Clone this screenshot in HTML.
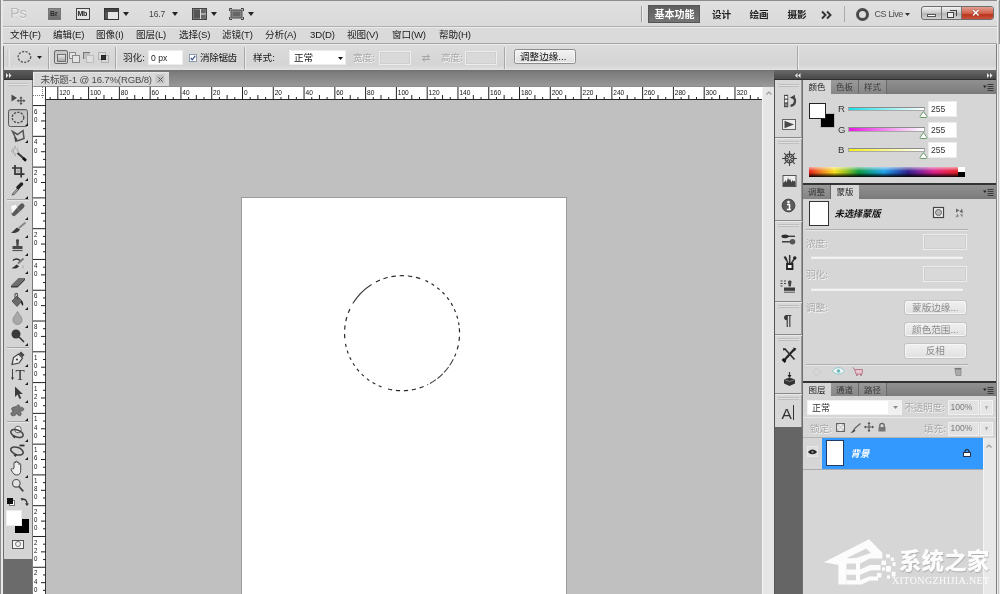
<!DOCTYPE html>
<html lang="zh-CN">
<head>
<meta charset="utf-8">
<title>Photoshop</title>
<style>
*{box-sizing:border-box;margin:0;padding:0}
html,body{width:1000px;height:594px;overflow:hidden;background:#d6d6d6}
body{position:relative;will-change:transform;font-family:"Liberation Sans","Noto Sans CJK SC",sans-serif;font-size:9.6px;color:#1a1a1a;line-height:1}
.a{position:absolute}
.t{position:absolute;white-space:nowrap;line-height:12px;height:12px}
.b{font-weight:bold}
.dis{color:#a9a9a9;text-shadow:0.7px 0.7px 0 #f8f8f8}
svg{position:absolute;overflow:visible}
#appbar{left:0;top:0;width:1000px;height:27px;background:linear-gradient(#e0e0e0,#dadada);border-top:1px solid #8d8d8d;border-bottom:1px solid #b0b0b0}
#menubar{left:0;top:27px;width:1000px;height:17px;background:#dadada;border-top:1px solid #ececec;border-bottom:1px solid #a4a4a4}
#optbar{left:0;top:44px;width:1000px;height:26px;background:linear-gradient(#dcdcdc,#d4d4d4 80%,#e2e2e2);border-top:1px solid #ececec}
#tabbar{left:3px;top:70px;width:771px;height:17px;background:linear-gradient(#707070 0,#7c7c7c 15%,#9a9a9a 100%)}
#doctab{left:33px;top:72px;width:136px;height:15px;background:#d8d8d8;border-left:1px solid #eee;border-top:1px solid #e6e6e6}
#hruler{left:33px;top:86px;width:729px;height:14px;background:#fff;border-top:1px solid #8c8c8c;border-bottom:1px solid #222}
#vruler{left:33px;top:99px;width:13px;height:495px;background:#fff;border-right:1px solid #3a3a3a}
#stage{left:46px;top:100px;width:716px;height:494px;background:#c0c0c0}
#canvas{left:241px;top:197px;width:326px;height:398px;background:#fff;border:1px solid #9c9c9c}
#vscroll{left:762px;top:87px;width:12px;height:507px;background:#e6e6e6;border-left:1px solid #f4f4f4}
#toolbar{left:3px;top:71px;width:30px;height:523px;background:#d4d4d4}
#dock{left:774px;top:71px;width:222px;height:523px;background:#656565}
.wl{left:0;top:0;width:3px;height:594px;background:#e8e8e8;border-left:1px solid #8e8e8e}
.wl2{left:3px;top:46px;width:1px;height:548px;background:#6e6e6e}
.wr{left:997px;top:0;width:3px;height:594px;background:#ebebeb}
.wr2{left:996px;top:44px;width:1px;height:550px;background:#808080}
.wr3{left:998px;top:1px;width:1px;height:593px;background:#c0c5ca}
.wr4{left:999px;top:0;width:1px;height:44px;background:#909090}
.ptabs{left:803px;width:193px;height:14px;background:linear-gradient(#919191,#7a7a7a)}
.ptab{position:absolute;top:0;height:14px;width:28px;text-align:center;line-height:15px;font-size:8.500px;color:#3a3a3a;border-right:1px solid #6a6a6a;background:linear-gradient(#9a9a9a,#858585)}
.ptab.on{background:#d6d6d6;color:#222;border-right:none;border-left:none}
.panel{left:803px;width:193px;background:#d6d6d6}
.inp{position:absolute;background:#fff;border:1px solid #ececec}
.dinp{position:absolute;background:#d9d9d9;border:1px solid #ededed;box-shadow:inset 0 0 0 1px #cfcfcf}
.btn{position:absolute;background:linear-gradient(#efefef,#e2e2e2);border:1px solid #f6f6f6;border-radius:2px;box-shadow:0 0 0 1px #c4c4c4;text-align:center;color:#8c8c8c}
.grip{position:absolute;left:3px;width:21px;height:3px;border-top:1px solid #bdbdbd;border-bottom:1px solid #bdbdbd;background:#e2e2e2}
.sep{position:absolute;left:0;width:27px;height:2px;border-top:1px solid #8a8a8a;background:#e8e8e8}
</style>
</head>
<body>
<div class="a" id="appbar"></div>
<div class="t" style="left:10px;top:5px;font-size:14.500px;line-height:16px;height:16px;color:#b8b8b8;letter-spacing:-0.2px;text-shadow:0 1px 0 #f4f4f4">Ps</div>
<div class="a" style="left:48px;top:8px;width:13px;height:12px;background:linear-gradient(#8a8a8a,#6d6d6d);border:1px solid #777"></div><div class="t b" style="left:50px;top:9px;font-size:7px;line-height:10px;height:10px;color:#2c2c2c">Br</div>
<div class="a" style="left:76px;top:8px;width:14px;height:12px;background:#e4e4e4;border:1px solid #444"></div><div class="t b" style="left:77.5px;top:9px;font-size:7px;line-height:10px;height:10px;color:#222;letter-spacing:-0.3px">Mb</div>
<svg style="left:104px;top:8px" width="15" height="12" viewBox="0 0 15 12"><rect x="0.5" y="0.5" width="14" height="11" fill="#e6e6e6" stroke="#333"/><rect x="1" y="1" width="13" height="3" fill="#444"/><rect x="1" y="4" width="3" height="7" fill="#555"/></svg>
<svg style="left:122.5px;top:12.0px" width="6" height="4" viewBox="0 0 6 4"><polygon points="0,0 6,0 3.0,4" fill="#222"/></svg>
<div class="t" style="left:149px;top:8px;font-size:8.600px;letter-spacing:-0.150px;color:#444">16.7</div>
<svg style="left:172.0px;top:12.0px" width="6" height="4" viewBox="0 0 6 4"><polygon points="0,0 6,0 3.0,4" fill="#222"/></svg>
<svg style="left:192px;top:8px" width="15" height="12" viewBox="0 0 15 12"><rect x="0.5" y="0.5" width="14" height="11" fill="#777" stroke="#444"/><rect x="2" y="2" width="6" height="8" fill="#555"/><rect x="9" y="2" width="4" height="3.5" fill="#666"/><rect x="9" y="6.5" width="4" height="3.5" fill="#666"/><path d="M8.5 1v10M9 6h5" stroke="#ddd" stroke-width="1"/></svg>
<svg style="left:210.5px;top:12.0px" width="6" height="4" viewBox="0 0 6 4"><polygon points="0,0 6,0 3.0,4" fill="#222"/></svg>
<svg style="left:229px;top:8px" width="15" height="12" viewBox="0 0 15 12"><rect x="2" y="2" width="11" height="8" fill="#999" stroke="#444"/><rect x="3.5" y="3.5" width="8" height="5" fill="#666"/><path d="M0.5 3V0.5H3M12 0.5h2.5V3M0.5 9v2.5H3M12 11.500h2.5V9" stroke="#444" fill="none"/></svg>
<svg style="left:248.0px;top:12.0px" width="6" height="4" viewBox="0 0 6 4"><polygon points="0,0 6,0 3.0,4" fill="#222"/></svg>
<div class="a" style="left:641px;top:6px;width:2px;height:16px;background:#9a9a9a;border-right:1px solid #eee"></div>
<div class="a" style="left:648px;top:5px;width:52px;height:18px;background:linear-gradient(#5e5e5e,#747474);border:1px solid #555"></div>
<div class="t b" style="left:654.5px;top:8.800px;font-size:10px;color:#fff">基本功能</div>
<div class="t b" style="left:712px;top:8.800px;font-size:9.6px;color:#222">设计</div>
<div class="t b" style="left:749.5px;top:8.800px;font-size:9.6px;color:#222">绘画</div>
<div class="t b" style="left:787.5px;top:8.800px;font-size:9.6px;color:#222">摄影</div>
<svg style="left:821px;top:10.500px" width="11" height="8" viewBox="0 0 11 8"><path d="M1 0.500l3.500 3.500-3.500 3.500M6 0.500l3.500 3.500-3.500 3.500" stroke="#333" stroke-width="1.900" fill="none"/></svg>
<div class="a" style="left:844px;top:6px;width:1px;height:16px;background:#aaa"></div>
<div class="a" style="left:855.5px;top:8px;width:13px;height:13px;border:3px solid #4a4a4a;border-radius:50%"></div>
<div class="t" style="left:874.5px;top:8px;font-size:9px;letter-spacing:-0.450px;color:#4c4c4c">CS Live</div>
<svg style="left:905.0px;top:13.0px" width="5" height="3" viewBox="0 0 5 3"><polygon points="0,0 5,0 2.5,3" fill="#333"/></svg>
<div class="a" style="left:921px;top:6px;width:73px;height:14px;border:1px solid #6e6e6e;border-radius:3px;background:linear-gradient(#f2f2f2,#c9c9c9 50%,#b4b4b4 51%,#d0d0d0);overflow:hidden"><div class="a" style="left:19px;top:0;width:1px;height:14px;background:#777"></div><div class="a" style="left:39px;top:0;width:33px;height:14px;background:linear-gradient(#e2a090,#cf5a44 50%,#b9341c 51%,#cf5f48);border-left:1px solid #777"></div><div class="a" style="left:5px;top:7px;width:9px;height:3px;background:#fff;border:1px solid #555"></div><div class="a" style="left:25px;top:5px;width:7px;height:6px;background:#eee;border:1px solid #444"></div><div class="a" style="left:28px;top:3px;width:7px;height:6px;border:1px solid #444;border-bottom:none;border-left:none"></div><div class="t b" style="left:50px;top:-0.500px;font-size:13px;color:#fff;text-shadow:0 0 1px #500">×</div></div>
<div class="a" id="menubar"></div>
<div class="t" style="left:10px;top:28.500px;letter-spacing:-0.150px">文件(F)</div>
<div class="t" style="left:53px;top:28.500px;letter-spacing:-0.150px">编辑(E)</div>
<div class="t" style="left:96px;top:28.500px;letter-spacing:-0.150px">图像(I)</div>
<div class="t" style="left:136px;top:28.500px;letter-spacing:-0.150px">图层(L)</div>
<div class="t" style="left:179px;top:28.500px;letter-spacing:-0.150px">选择(S)</div>
<div class="t" style="left:222px;top:28.500px;letter-spacing:-0.150px">滤镜(T)</div>
<div class="t" style="left:265px;top:28.500px;letter-spacing:-0.150px">分析(A)</div>
<div class="t" style="left:310px;top:28.500px;letter-spacing:-0.150px">3D(D)</div>
<div class="t" style="left:347px;top:28.500px;letter-spacing:-0.150px">视图(V)</div>
<div class="t" style="left:392px;top:28.500px;letter-spacing:-0.150px">窗口(W)</div>
<div class="t" style="left:439px;top:28.500px;letter-spacing:-0.150px">帮助(H)</div>
<div class="a" id="optbar"></div>
<div class="a" style="left:7px;top:49px;width:3px;height:18px;border-left:1px solid #cdcdcd;border-right:1px solid #e6e6e6"></div>
<svg style="left:17px;top:50px" width="15" height="15" viewBox="0 0 15 15"><ellipse cx="7.400" cy="6.900" rx="6.300" ry="5.400" fill="none" stroke="#555" stroke-width="1.300" stroke-dasharray="2.200 1.300"/></svg>
<svg style="left:36.5px;top:56.0px" width="5" height="3" viewBox="0 0 5 3"><polygon points="0,0 5,0 2.5,3" fill="#222"/></svg>
<div class="a" style="left:48px;top:47px;width:2px;height:22px;border-left:1px solid #a8a8a8;border-right:1px solid #ececec"></div>
<div class="a" style="left:54px;top:50px;width:14px;height:14px;border:1px solid #6a6a6a;border-radius:2px;background:linear-gradient(#c2c2c2,#d8d8d8)"></div>
<div class="a" style="left:57px;top:54px;width:9px;height:8px;border:1px solid #6e6e6e;background:linear-gradient(#e6e6e6,#a8a8a8)"></div>
<div class="a" style="left:69px;top:52px;width:7px;height:7px;border:1px solid #888;background:#e4e4e4"></div><div class="a" style="left:72px;top:55px;width:8px;height:8px;border:1px solid #888;background:#e4e4e4"></div>
<div class="a" style="left:86px;top:55px;width:8px;height:8px;border:1px solid #bbb;background:#dedede"></div><div class="a" style="left:83px;top:52px;width:7px;height:7px;border-left:1px solid #777;border-top:1px solid #777;background:#bdbdbd"></div><div class="a" style="left:86px;top:55px;width:4px;height:4px;background:#e0e0e0;border-left:1px solid #bbb;border-top:1px solid #bbb"></div>
<div class="a" style="left:98px;top:52px;width:8px;height:8px;border:1px solid #b0b0b0;background:#dcdcdc"></div><div class="a" style="left:101px;top:55px;width:8px;height:8px;border:1px solid #b0b0b0"></div><div class="a" style="left:101px;top:55px;width:5px;height:5px;background:#333;border:1px solid #222"></div>
<div class="a" style="left:115px;top:47px;width:2px;height:22px;border-left:1px solid #a8a8a8;border-right:1px solid #ececec"></div>
<div class="t" style="left:123px;top:51.500px">羽化:</div>
<div class="inp" style="left:147.5px;top:50px;width:35.500px;height:14.500px"></div><div class="t" style="left:151px;top:51.500px;color:#222;font-size:8.600px">0 px</div>
<div class="a" style="left:189px;top:53.500px;width:8px;height:8px;background:#fff;border:1px solid #8a9aa8"></div><svg style="left:190px;top:54.500px" width="6" height="6" viewBox="0 0 6 6"><path d="M0.800 3l1.500 1.800L5.200 0.800" stroke="#3a4f8c" stroke-width="1.200" fill="none"/></svg>
<div class="t" style="left:200px;top:51.500px;letter-spacing:-0.4px">消除锯齿</div>
<div class="a" style="left:244px;top:47px;width:2px;height:22px;border-left:1px solid #a8a8a8;border-right:1px solid #ececec"></div>
<div class="t" style="left:253px;top:51.500px">样式:</div>
<div class="inp" style="left:289px;top:50px;width:57px;height:15px"></div><div class="t" style="left:294px;top:51.500px">正常</div>
<svg style="left:337.5px;top:56.5px" width="5" height="3" viewBox="0 0 5 3"><polygon points="0,0 5,0 2.5,3" fill="#111"/></svg>
<div class="t dis" style="left:353px;top:51.500px">宽度:</div>
<div class="dinp" style="left:379px;top:50.500px;width:31.500px;height:14px"></div>
<svg style="left:421px;top:54px" width="10" height="8" viewBox="0 0 10 8"><path d="M1 2.500h7M6 0.500l2.500 2-2.500 2M9 5.500H2M4 3.500L1.500 5.500 4 7.500" stroke="#a4a4a4" stroke-width="1" fill="none"/></svg>
<div class="t dis" style="left:441px;top:51.500px">高度:</div>
<div class="dinp" style="left:465px;top:50.500px;width:32px;height:14px"></div>
<div class="a" style="left:504px;top:47px;width:2px;height:22px;border-left:1px solid #a8a8a8;border-right:1px solid #ececec"></div>
<div class="a" style="left:513.5px;top:49px;width:62.500px;height:14.500px;border:1px solid #8c8c8c;border-radius:2.500px;background:linear-gradient(#f4f4f4,#dedede);box-shadow:inset 0 0 0 1px #f6f6f6"></div><div class="t" style="left:520px;top:51px;color:#111">调整边缘...</div>
<div class="a" style="left:797px;top:46px;width:2px;height:24px;border-left:1px solid #a8a8a8;border-right:1px solid #ececec"></div>
<div class="a" id="tabbar"></div>
<div class="a" id="doctab"></div>
<div class="t" style="left:40.500px;top:73.500px;color:#4a4a4a;font-size:9.6px;letter-spacing:-0.170px">未标题-1 @ 16.7%(RGB/8)</div>
<div class="a" style="left:155px;top:74px;width:10px;height:10px;background:#c2c2c2;border:1px solid #cfcfcf"></div><svg style="left:157.500px;top:76.500px" width="5" height="5" viewBox="0 0 5 5"><path d="M0.300 0.300l4.400 4.400M4.700 0.300L0.300 4.700" stroke="#555" stroke-width="1"/></svg>
<div class="a" id="stage"></div>
<div class="a" id="canvas"></div>
<svg style="left:0;top:0" width="1000" height="594" viewBox="0 0 1000 594"><path d="M352.76 303.59A57.5 57.5 0 0 1 371.58 284.44" fill="none" stroke="#3a3a3a" stroke-width="1.05"/><path d="M375.95 281.97A57.5 57.5 0 0 1 423.59 279.89" fill="none" stroke="#2a2a2a" stroke-width="1.2" stroke-dasharray="4.400 3.800"/><path d="M425.44 280.67A57.5 57.5 0 0 1 458.99 325.20" fill="none" stroke="#2a2a2a" stroke-width="1.2" stroke-dasharray="3 3.900"/><path d="M459.33 328.19A57.5 57.5 0 0 1 454.58 356.59" fill="none" stroke="#2a2a2a" stroke-width="1.2" stroke-dasharray="4.200 4.400"/><path d="M453.28 359.30A57.5 57.5 0 0 1 427.26 384.88" fill="none" stroke="#3a3a3a" stroke-width="1.05" stroke-dasharray="7 2"/><path d="M423.59 386.51A57.5 57.5 0 0 1 384.28 387.89" fill="none" stroke="#2a2a2a" stroke-width="1.2" stroke-dasharray="4.200 3.800"/><path d="M381.44 386.88A57.5 57.5 0 0 1 345.11 341.20" fill="none" stroke="#2a2a2a" stroke-width="1.2" stroke-dasharray="3 3.900"/><path d="M344.77 338.21A57.5 57.5 0 0 1 350.82 307.10" fill="none" stroke="#2a2a2a" stroke-width="1.2" stroke-dasharray="4.200 4.400"/></svg>
<div class="a" id="hruler"></div>
<div class="a" id="vruler"></div>
<div class="a" id="vscroll"></div>
<svg style="left:0;top:0" width="1000" height="594" viewBox="0 0 1000 594" font-family="Liberation Sans, sans-serif" font-size="7.800" fill="#111"><path d="M33 95.500H46M42.500 87V99" stroke="#777" stroke-width="1" stroke-dasharray="1 1" fill="none"/><path d="M45.500 87V99" stroke="#333" stroke-width="1"/><path d="M50.12 97V99M57.82 87V99M65.51 97V99M73.21 95V99M80.91 97V99M88.60 87V99M96.29 97V99M103.99 95V99M111.69 97V99M119.38 87V99M127.07 97V99M134.77 95V99M142.47 97V99M150.16 87V99M157.85 97V99M165.55 95V99M173.25 97V99M180.94 87V99M188.63 97V99M196.33 95V99M204.03 97V99M211.72 87V99M219.41 97V99M227.11 95V99M234.81 97V99M242.50 87V99M250.19 97V99M257.89 95V99M265.58 97V99M273.28 87V99M280.97 97V99M288.67 95V99M296.36 97V99M304.06 87V99M311.75 97V99M319.45 95V99M327.14 97V99M334.84 87V99M342.54 97V99M350.23 95V99M357.93 97V99M365.62 87V99M373.31 97V99M381.01 95V99M388.70 97V99M396.40 87V99M404.09 97V99M411.79 95V99M419.48 97V99M427.18 87V99M434.88 97V99M442.57 95V99M450.26 97V99M457.96 87V99M465.66 97V99M473.35 95V99M481.05 97V99M488.74 87V99M496.44 97V99M504.13 95V99M511.82 97V99M519.52 87V99M527.22 97V99M534.91 95V99M542.61 97V99M550.30 87V99M558.00 97V99M565.69 95V99M573.38 97V99M581.08 87V99M588.78 97V99M596.47 95V99M604.17 97V99M611.86 87V99M619.56 97V99M627.25 95V99M634.95 97V99M642.64 87V99M650.34 97V99M658.03 95V99M665.73 97V99M673.42 87V99M681.12 97V99M688.81 95V99M696.51 97V99M704.20 87V99M711.90 97V99M719.59 95V99M727.29 97V99M734.98 87V99M742.68 97V99M750.37 95V99M758.07 97V99" stroke="#222" stroke-width="1" fill="none"/><text x="59.2" y="94.700" font-size="7.300" textLength="10.95" lengthAdjust="spacingAndGlyphs">120</text><text x="90.0" y="94.700" font-size="7.300" textLength="10.95" lengthAdjust="spacingAndGlyphs">100</text><text x="120.8" y="94.700" font-size="7.300" textLength="7.30" lengthAdjust="spacingAndGlyphs">80</text><text x="151.6" y="94.700" font-size="7.300" textLength="7.30" lengthAdjust="spacingAndGlyphs">60</text><text x="182.3" y="94.700" font-size="7.300" textLength="7.30" lengthAdjust="spacingAndGlyphs">40</text><text x="213.1" y="94.700" font-size="7.300" textLength="7.30" lengthAdjust="spacingAndGlyphs">20</text><text x="243.9" y="94.700" font-size="7.300" textLength="3.65" lengthAdjust="spacingAndGlyphs">0</text><text x="274.7" y="94.700" font-size="7.300" textLength="7.30" lengthAdjust="spacingAndGlyphs">20</text><text x="305.5" y="94.700" font-size="7.300" textLength="7.30" lengthAdjust="spacingAndGlyphs">40</text><text x="336.2" y="94.700" font-size="7.300" textLength="7.30" lengthAdjust="spacingAndGlyphs">60</text><text x="367.0" y="94.700" font-size="7.300" textLength="7.30" lengthAdjust="spacingAndGlyphs">80</text><text x="397.8" y="94.700" font-size="7.300" textLength="10.95" lengthAdjust="spacingAndGlyphs">100</text><text x="428.6" y="94.700" font-size="7.300" textLength="10.95" lengthAdjust="spacingAndGlyphs">120</text><text x="459.4" y="94.700" font-size="7.300" textLength="10.95" lengthAdjust="spacingAndGlyphs">140</text><text x="490.1" y="94.700" font-size="7.300" textLength="10.95" lengthAdjust="spacingAndGlyphs">160</text><text x="520.9" y="94.700" font-size="7.300" textLength="10.95" lengthAdjust="spacingAndGlyphs">180</text><text x="551.7" y="94.700" font-size="7.300" textLength="10.95" lengthAdjust="spacingAndGlyphs">200</text><text x="582.5" y="94.700" font-size="7.300" textLength="10.95" lengthAdjust="spacingAndGlyphs">220</text><text x="613.3" y="94.700" font-size="7.300" textLength="10.95" lengthAdjust="spacingAndGlyphs">240</text><text x="644.0" y="94.700" font-size="7.300" textLength="10.95" lengthAdjust="spacingAndGlyphs">260</text><text x="674.8" y="94.700" font-size="7.300" textLength="10.95" lengthAdjust="spacingAndGlyphs">280</text><text x="705.6" y="94.700" font-size="7.300" textLength="10.95" lengthAdjust="spacingAndGlyphs">300</text><text x="736.4" y="94.700" font-size="7.300" textLength="10.95" lengthAdjust="spacingAndGlyphs">320</text><path d="M33 105.56H46M43 113.25H46M41 120.95H46M43 128.65H46M33 136.34H46M43 144.03H46M41 151.73H46M43 159.43H46M33 167.12H46M43 174.81H46M41 182.51H46M43 190.21H46M33 197.90H46M43 205.59H46M41 213.29H46M43 220.99H46M33 228.68H46M43 236.38H46M41 244.07H46M43 251.77H46M33 259.46H46M43 267.16H46M41 274.85H46M43 282.55H46M33 290.24H46M43 297.94H46M41 305.63H46M43 313.32H46M33 321.02H46M43 328.71H46M41 336.41H46M43 344.10H46M33 351.80H46M43 359.50H46M41 367.19H46M43 374.88H46M33 382.58H46M43 390.28H46M41 397.97H46M43 405.67H46M33 413.36H46M43 421.06H46M41 428.75H46M43 436.44H46M33 444.14H46M43 451.83H46M41 459.53H46M43 467.22H46M33 474.92H46M43 482.61H46M41 490.31H46M43 498.00H46M33 505.70H46M43 513.40H46M41 521.09H46M43 528.79H46M33 536.48H46M43 544.18H46M41 551.87H46M43 559.57H46M33 567.26H46M43 574.96H46M41 582.65H46M43 590.35H46" stroke="#222" stroke-width="1" fill="none"/><text x="34.100" y="113.6" font-size="7.500" textLength="3.400" lengthAdjust="spacingAndGlyphs">6</text><text x="34.100" y="121.8" font-size="7.500" textLength="3.400" lengthAdjust="spacingAndGlyphs">0</text><text x="34.100" y="144.3" font-size="7.500" textLength="3.400" lengthAdjust="spacingAndGlyphs">4</text><text x="34.100" y="152.5" font-size="7.500" textLength="3.400" lengthAdjust="spacingAndGlyphs">0</text><text x="34.100" y="175.1" font-size="7.500" textLength="3.400" lengthAdjust="spacingAndGlyphs">2</text><text x="34.100" y="183.3" font-size="7.500" textLength="3.400" lengthAdjust="spacingAndGlyphs">0</text><text x="34.100" y="205.9" font-size="7.500" textLength="3.400" lengthAdjust="spacingAndGlyphs">0</text><text x="34.100" y="236.7" font-size="7.500" textLength="3.400" lengthAdjust="spacingAndGlyphs">2</text><text x="34.100" y="244.9" font-size="7.500" textLength="3.400" lengthAdjust="spacingAndGlyphs">0</text><text x="34.100" y="267.5" font-size="7.500" textLength="3.400" lengthAdjust="spacingAndGlyphs">4</text><text x="34.100" y="275.7" font-size="7.500" textLength="3.400" lengthAdjust="spacingAndGlyphs">0</text><text x="34.100" y="298.2" font-size="7.500" textLength="3.400" lengthAdjust="spacingAndGlyphs">6</text><text x="34.100" y="306.4" font-size="7.500" textLength="3.400" lengthAdjust="spacingAndGlyphs">0</text><text x="34.100" y="329.0" font-size="7.500" textLength="3.400" lengthAdjust="spacingAndGlyphs">8</text><text x="34.100" y="337.2" font-size="7.500" textLength="3.400" lengthAdjust="spacingAndGlyphs">0</text><text x="34.100" y="359.8" font-size="7.500" textLength="3.400" lengthAdjust="spacingAndGlyphs">1</text><text x="34.100" y="368.0" font-size="7.500" textLength="3.400" lengthAdjust="spacingAndGlyphs">0</text><text x="34.100" y="376.2" font-size="7.500" textLength="3.400" lengthAdjust="spacingAndGlyphs">0</text><text x="34.100" y="390.6" font-size="7.500" textLength="3.400" lengthAdjust="spacingAndGlyphs">1</text><text x="34.100" y="398.8" font-size="7.500" textLength="3.400" lengthAdjust="spacingAndGlyphs">2</text><text x="34.100" y="407.0" font-size="7.500" textLength="3.400" lengthAdjust="spacingAndGlyphs">0</text><text x="34.100" y="421.4" font-size="7.500" textLength="3.400" lengthAdjust="spacingAndGlyphs">1</text><text x="34.100" y="429.6" font-size="7.500" textLength="3.400" lengthAdjust="spacingAndGlyphs">4</text><text x="34.100" y="437.8" font-size="7.500" textLength="3.400" lengthAdjust="spacingAndGlyphs">0</text><text x="34.100" y="452.1" font-size="7.500" textLength="3.400" lengthAdjust="spacingAndGlyphs">1</text><text x="34.100" y="460.3" font-size="7.500" textLength="3.400" lengthAdjust="spacingAndGlyphs">6</text><text x="34.100" y="468.5" font-size="7.500" textLength="3.400" lengthAdjust="spacingAndGlyphs">0</text><text x="34.100" y="482.9" font-size="7.500" textLength="3.400" lengthAdjust="spacingAndGlyphs">1</text><text x="34.100" y="491.1" font-size="7.500" textLength="3.400" lengthAdjust="spacingAndGlyphs">8</text><text x="34.100" y="499.3" font-size="7.500" textLength="3.400" lengthAdjust="spacingAndGlyphs">0</text><text x="34.100" y="513.7" font-size="7.500" textLength="3.400" lengthAdjust="spacingAndGlyphs">2</text><text x="34.100" y="521.9" font-size="7.500" textLength="3.400" lengthAdjust="spacingAndGlyphs">0</text><text x="34.100" y="530.1" font-size="7.500" textLength="3.400" lengthAdjust="spacingAndGlyphs">0</text><text x="34.100" y="544.5" font-size="7.500" textLength="3.400" lengthAdjust="spacingAndGlyphs">2</text><text x="34.100" y="552.7" font-size="7.500" textLength="3.400" lengthAdjust="spacingAndGlyphs">2</text><text x="34.100" y="560.9" font-size="7.500" textLength="3.400" lengthAdjust="spacingAndGlyphs">0</text><text x="34.100" y="575.3" font-size="7.500" textLength="3.400" lengthAdjust="spacingAndGlyphs">2</text><text x="34.100" y="583.5" font-size="7.500" textLength="3.400" lengthAdjust="spacingAndGlyphs">4</text><text x="34.100" y="591.7" font-size="7.500" textLength="3.400" lengthAdjust="spacingAndGlyphs">0</text></svg>
<svg style="left:765.500px;top:91px" width="6" height="4" viewBox="0 0 6 4"><path d="M0.500 3.500L3 1l2.500 2.500" stroke="#9a9a9a" stroke-width="1.200" fill="none"/></svg>
<div class="a" id="toolbar"></div>
<div class="a" style="left:3px;top:558.500px;width:30px;height:36px;background:#6b6b6b"></div>
<div class="a" style="left:3px;top:70px;width:30px;height:10px;background:linear-gradient(#5c5c5c,#444);border-bottom:1px solid #333"></div>
<svg style="left:6px;top:73px" width="6" height="5" viewBox="0 0 6 5"><path d="M0 0l2.500 2.500L0 5zM3 0l2.500 2.500L3 5z" fill="#e8e8e8"/></svg>
<div class="a" style="left:3px;top:71px;width:1px;height:523px;background:#8a8a8a"></div><div class="a" style="left:32px;top:80px;width:1px;height:514px;background:#7a7a7a"></div>
<div class="a" style="left:8px;top:83px;width:20px;height:3px;border-top:1px solid #c0c0c0;border-bottom:1px solid #c0c0c0;background:#e4e4e4"></div>
<div class="a" style="left:7px;top:199px;width:22px;height:2px;border-top:1px solid #a6a6a6;background:#e6e6e6"></div>
<div class="a" style="left:7px;top:347px;width:22px;height:2px;border-top:1px solid #a6a6a6;background:#e6e6e6"></div>
<div class="a" style="left:7px;top:420.5px;width:22px;height:2px;border-top:1px solid #a6a6a6;background:#e6e6e6"></div>
<svg style="left:11px;top:94px" width="15" height="11" viewBox="0 0 15 11"><path d="M0.500 0.500l5.500 3.500-5.500 3.500z" fill="#4a4a4a"/><path d="M10 3.500v6.500M6.800 6.800h6.500" stroke="#444" stroke-width="1.100"/><path d="M10 2.500l1.600 1.800h-3.200zM10 11l1.600-1.800h-3.200zM5.800 6.800l1.800-1.600v3.200zM14.300 6.800l-1.800-1.600v3.200z" fill="#444"/></svg>
<div class="a" style="left:8px;top:108.500px;width:20px;height:18px;border:1.400px solid #5c5c5c;border-radius:2.500px;background:linear-gradient(#c4c4c4,#d0d0d0);box-shadow:inset 0 1px 1px #aaa"></div>
<svg style="left:11px;top:111px" width="14" height="13" viewBox="0 0 14 13"><ellipse cx="7" cy="6.500" rx="5.800" ry="5.200" fill="none" stroke="#4c4c4c" stroke-width="1.300" stroke-dasharray="2.300 1.200"/></svg>
<svg style="left:11px;top:129px" width="15" height="14" viewBox="0 0 15 14"><path d="M1.500 2.500l5 3 5.500-4 1 8-7 2.500z" fill="none" stroke="#555" stroke-width="1.500"/><path d="M3 8l3.500 2-2 3.500z" fill="#444"/></svg>
<svg style="left:10px;top:145px" width="17" height="17" viewBox="0 0 17 17"><path d="M7.500 8l8 7" stroke="#3a3a3a" stroke-width="2.200"/><path d="M13 13l3 2.800" stroke="#111" stroke-width="2.600"/><path d="M5 1v3M5 8v3M1 6h3M7 6h2M2.500 3.500l1.500 1.500M8 3l-1.500 1.500M2.500 8.500l1.500-1.500" stroke="#9a9a9a" stroke-width="1"/></svg>
<svg style="left:11.5px;top:164.5px" width="12" height="12" viewBox="0 0 12 12"><path d="M3 0v9.200H12.500M0 3h9.200V12.500" stroke="#333" stroke-width="1.700" fill="none"/><rect x="4.500" y="4.500" width="3.200" height="3.200" fill="#aaa"/></svg>
<svg style="left:11px;top:182px" width="14" height="14" viewBox="0 0 14 14"><path d="M2 12.500l6-6.500" stroke="#555" stroke-width="2.400"/><path d="M2.500 12l5-5.500" stroke="#ddd" stroke-width="0.900"/><path d="M7 5.500l3.500-3.500" stroke="#222" stroke-width="3.400" stroke-linecap="round"/><path d="M1 13.500l1.200-1.500" stroke="#444" stroke-width="1"/></svg>
<svg style="left:9px;top:202px" width="17" height="16" viewBox="0 0 17 16"><path d="M5 11.500l8-7.500" stroke="#5a5a5a" stroke-width="5" stroke-linecap="round"/><path d="M1.500 4l5.500-2 1.500 3-5.500 6.500z" fill="#fafafa" stroke="#b4b4b4" stroke-width="0.500"/><path d="M8.500 6.500l3 3" stroke="#888" stroke-width="0.800"/></svg>
<svg style="left:10px;top:221px" width="17" height="14" viewBox="0 0 17 14"><path d="M9 7l6.500-5.500" stroke="#888" stroke-width="2"/><path d="M1 11.500c2-0.500 3.500-3 6-5l3 2c-1.500 3-5.500 4.500-9 3z" fill="#3c3c3c"/></svg>
<svg style="left:11.5px;top:239px" width="11" height="13" viewBox="0 0 11 13"><path d="M4 1c0-1 3-1 3 0l-0.500 6h-2z" fill="#444"/><path d="M0.500 7h10v3h-10z" fill="#4a4a4a"/><path d="M0.500 11.500h10" stroke="#555" stroke-width="1.200"/></svg>
<svg style="left:10px;top:257px" width="16" height="14" viewBox="0 0 16 14"><path d="M1.500 11c2-0.300 3-2 5-3.500l2.500 1.500c-1.500 2.500-4.500 3.300-7.500 2z" fill="#333"/><path d="M8 6.500l5.500-5" stroke="#777" stroke-width="1.800"/><path d="M3 3.500c2-2 5-2 7 0" stroke="#333" stroke-width="1.600" fill="none"/><path d="M13 8.500v3" stroke="#aaa" stroke-width="1"/></svg>
<svg style="left:10px;top:275px" width="16" height="14" viewBox="0 0 16 14"><path d="M1 10.500l7.500-7.500h6.500l-7.500 7.500z" fill="#6e6e6e"/><path d="M1 10.500h6.500l7.500-7.500v2l-7.500 7.500H1z" fill="#3e3e3e"/></svg>
<svg style="left:10px;top:292px" width="16" height="16" viewBox="0 0 16 16"><path d="M2 9l5-5 5 5-5 5.500z" fill="#6a6a6a" stroke="#444" stroke-width="0.800"/><path d="M5 6.500v-4c0-1.500 2.500-1.500 2.500 0v5" stroke="#555" stroke-width="1.100" fill="none"/><path d="M11.500 8.500c1.500 1 2 3 1.500 5.500-1-1-2-2-2-4z" fill="#222"/></svg>
<svg style="left:12px;top:311px" width="11" height="14" viewBox="0 0 11 14"><path d="M5.500 0.500c1.500 3 4.500 5.500 4.500 8.500a4.500 4.500 0 0 1-9 0c0-3 3-5.500 4.500-8.500z" fill="#a8a8a8" stroke="#888" stroke-width="0.800"/></svg>
<svg style="left:11px;top:329px" width="15" height="15" viewBox="0 0 15 15"><circle cx="5" cy="5" r="4.500" fill="#3a3a3a"/><path d="M8 8l5 5" stroke="#333" stroke-width="1.600"/></svg>
<svg style="left:11px;top:351px" width="14" height="14" viewBox="0 0 14 14"><path d="M1 13.500l1.500-7 5-3.500 4 4-3.500 5z" fill="#e8e8e8" stroke="#444" stroke-width="1.200"/><path d="M8 2.500l2-2 3.500 3.500-2 2z" fill="#444"/><circle cx="6" cy="8.500" r="1" fill="#333"/></svg>
<div class="t" style="left:15.500px;top:366.500px;font-family:'Liberation Serif',serif;font-size:15px;line-height:16px;height:16px;color:#333">T</div>
<svg style="left:11px;top:369px" width="4" height="12" viewBox="0 0 4 12"><path d="M1.500 0v9" stroke="#444" stroke-width="1"/><path d="M0 8.500h3l-1.500 2.500z" fill="#333"/></svg>
<svg style="left:14px;top:386px" width="9" height="14" viewBox="0 0 9 14"><path d="M1 0.500v10.500l2.500-2.500 2 4.500 1.800-0.800-2-4.300h3.500z" fill="#3a3a3a"/></svg>
<svg style="left:10px;top:404px" width="16" height="14" viewBox="0 0 16 14"><path d="M7 1.500c2-1.500 3.500 0.500 2.500 2.500 2.500-1.500 5 0 4 2-0.800 1.500-3 1-4 1 1.500 1.500 2.500 3.500 1 4.500s-3-0.500-3.500-2.500c-1 2-3 3.500-5 2.500s-1-3.500 2-4.500c-2.500 0-3-2.500-1.500-3.500s3.500 0 4.500-2z" fill="#777" stroke="#555" stroke-width="0.800"/></svg>
<svg style="left:9px;top:425px" width="17" height="15" viewBox="0 0 17 15"><circle cx="9" cy="4.500" r="3.300" fill="#eee" stroke="#666" stroke-width="1"/><ellipse cx="8" cy="8.500" rx="6.500" ry="3.500" fill="none" stroke="#444" stroke-width="1.500" transform="rotate(20 8 8.500)"/><path d="M3 11l3.500 0.500-1 2z" fill="#333"/></svg>
<svg style="left:9px;top:443px" width="17" height="15" viewBox="0 0 17 15"><ellipse cx="8" cy="8" rx="6.500" ry="3.600" fill="none" stroke="#444" stroke-width="1.600" transform="rotate(20 8 8)"/><path d="M4 11.500l4 0.500-1.500 2z" fill="#333"/><path d="M10.500 2.500h5" stroke="#333" stroke-width="1.800"/></svg>
<svg style="left:10px;top:460px" width="14" height="16" viewBox="0 0 14 16"><path d="M4 8v-5c0-1.200 1.600-1.200 1.600 0v-1c0-1.200 1.700-1.200 1.700 0v1c0-1.200 1.700-1.200 1.700 0v1.500c0-1.200 1.700-1.200 1.700 0v6c0 3-1.500 4.500-4 4.500-2.500 0-3.500-1.500-5.500-5-0.700-1.200 0.800-2 1.600-0.800z" fill="#eee" stroke="#444" stroke-width="1"/></svg>
<svg style="left:11px;top:478px" width="14" height="15" viewBox="0 0 14 15"><circle cx="5.300" cy="5.300" r="3.800" fill="#e4e4e4" stroke="#555" stroke-width="1.200"/><path d="M8 8.500l4.300 4.800" stroke="#444" stroke-width="1.800"/></svg>
<svg style="left:25px;top:122.5px" width="3" height="3" viewBox="0 0 3 3"><path d="M3 0V3H0z" fill="#1a1a1a"/></svg>
<svg style="left:25px;top:140px" width="3" height="3" viewBox="0 0 3 3"><path d="M3 0V3H0z" fill="#1a1a1a"/></svg>
<svg style="left:25px;top:177.5px" width="3" height="3" viewBox="0 0 3 3"><path d="M3 0V3H0z" fill="#1a1a1a"/></svg>
<svg style="left:25px;top:195.5px" width="3" height="3" viewBox="0 0 3 3"><path d="M3 0V3H0z" fill="#1a1a1a"/></svg>
<svg style="left:25px;top:216.5px" width="3" height="3" viewBox="0 0 3 3"><path d="M3 0V3H0z" fill="#1a1a1a"/></svg>
<svg style="left:25px;top:234.5px" width="3" height="3" viewBox="0 0 3 3"><path d="M3 0V3H0z" fill="#1a1a1a"/></svg>
<svg style="left:25px;top:252.5px" width="3" height="3" viewBox="0 0 3 3"><path d="M3 0V3H0z" fill="#1a1a1a"/></svg>
<svg style="left:25px;top:270.5px" width="3" height="3" viewBox="0 0 3 3"><path d="M3 0V3H0z" fill="#1a1a1a"/></svg>
<svg style="left:25px;top:288.5px" width="3" height="3" viewBox="0 0 3 3"><path d="M3 0V3H0z" fill="#1a1a1a"/></svg>
<svg style="left:25px;top:306.5px" width="3" height="3" viewBox="0 0 3 3"><path d="M3 0V3H0z" fill="#1a1a1a"/></svg>
<svg style="left:25px;top:324.5px" width="3" height="3" viewBox="0 0 3 3"><path d="M3 0V3H0z" fill="#1a1a1a"/></svg>
<svg style="left:25px;top:342.5px" width="3" height="3" viewBox="0 0 3 3"><path d="M3 0V3H0z" fill="#1a1a1a"/></svg>
<svg style="left:25px;top:363.5px" width="3" height="3" viewBox="0 0 3 3"><path d="M3 0V3H0z" fill="#1a1a1a"/></svg>
<svg style="left:25px;top:381.5px" width="3" height="3" viewBox="0 0 3 3"><path d="M3 0V3H0z" fill="#1a1a1a"/></svg>
<svg style="left:25px;top:399.5px" width="3" height="3" viewBox="0 0 3 3"><path d="M3 0V3H0z" fill="#1a1a1a"/></svg>
<svg style="left:25px;top:417.5px" width="3" height="3" viewBox="0 0 3 3"><path d="M3 0V3H0z" fill="#1a1a1a"/></svg>
<svg style="left:25px;top:438.5px" width="3" height="3" viewBox="0 0 3 3"><path d="M3 0V3H0z" fill="#1a1a1a"/></svg>
<svg style="left:25px;top:456.5px" width="3" height="3" viewBox="0 0 3 3"><path d="M3 0V3H0z" fill="#1a1a1a"/></svg>
<svg style="left:25px;top:474.5px" width="3" height="3" viewBox="0 0 3 3"><path d="M3 0V3H0z" fill="#1a1a1a"/></svg>
<div class="a" style="left:9px;top:500px;width:6px;height:6px;background:#fff;border:1px solid #777"></div><div class="a" style="left:7px;top:498px;width:6px;height:6px;background:#111"></div>
<svg style="left:20px;top:497px" width="9" height="10" viewBox="0 0 9 10"><path d="M2 2.500c3-1 5 1 5 4.500" stroke="#333" stroke-width="1.300" fill="none"/><path d="M0.500 1l3 0.500-1.500 2.500zM5 6.500h4l-2 2.500z" fill="#333"/></svg>
<div class="a" style="left:15px;top:519px;width:14px;height:13.500px;background:#000"></div>
<div class="a" style="left:6px;top:510px;width:16px;height:16px;background:#fff;border:1px solid #ececec"></div>
<div class="a" style="left:11.500px;top:539.500px;width:12px;height:9px;background:#f4f4f4;border:1px solid #555"></div><div class="a" style="left:14.500px;top:541px;width:6px;height:6px;border:1px solid #777;border-radius:50%"></div>
<div class="a" id="dock"></div>
<div class="a" style="left:774px;top:70px;width:222px;height:10px;background:linear-gradient(#686868,#484848);border-bottom:1px solid #2e2e2e"></div>
<svg style="left:794.500px;top:73px" width="6" height="5" viewBox="0 0 6 5"><path d="M2.500 0L0 2.500 2.500 5zM5.500 0L3 2.500 5.500 5z" fill="#e8e8e8"/></svg>
<svg style="left:987px;top:73px" width="6" height="5" viewBox="0 0 6 5"><path d="M0 0l2.500 2.500L0 5zM3 0l2.500 2.500L3 5z" fill="#e8e8e8"/></svg>
<div class="a" style="left:775px;top:80px;width:27px;height:346.500px;background:#d7d7d7;border-right:1px solid #9a9a9a"><div class="grip" style="top:3.5px"></div><div class="grip" style="top:61px"></div><div class="grip" style="top:144px"></div><div class="grip" style="top:225px"></div><div class="grip" style="top:258px"></div><div class="grip" style="top:317px"></div><div class="sep" style="top:57px"></div><div class="sep" style="top:140px"></div><div class="sep" style="top:221px"></div><div class="sep" style="top:254px"></div><div class="sep" style="top:312.5px"></div></div>
<div class="a" style="left:774px;top:80px;width:1px;height:514px;background:#555"></div>
<svg style="left:782.5px;top:93.5px" width="14" height="14" viewBox="0 0 14 14"><rect x="1" y="0.800" width="4.200" height="12.400" fill="#4a4a4a"/><rect x="1.800" y="2" width="2.600" height="2.600" fill="#f4f4f4"/><rect x="1.800" y="5.800" width="2.600" height="2.600" fill="#f4f4f4"/><rect x="1.800" y="9.600" width="2.600" height="2.400" fill="#8a8a8a"/><path d="M7.500 11.800c5.500-0.500 5.500-6.500 2.500-9" stroke="#444" stroke-width="2.200" fill="none"/><path d="M6.800 3.800l5-3 0.200 5z" fill="#444"/></svg>
<svg style="left:782.0px;top:118.5px" width="14" height="11" viewBox="0 0 14 11"><rect x="0.500" y="0.500" width="13" height="10" fill="#ececec" stroke="#666" stroke-width="1"/><path d="M2.500 1.800l9.500 3.700-9.500 3.700z" fill="#4a4a4a"/></svg>
<svg style="left:781.5px;top:151.0px" width="15" height="15" viewBox="0 0 15 15"><circle cx="7.500" cy="7.500" r="4.200" fill="none" stroke="#444" stroke-width="1.600"/><path d="M7.500 0v15M0 7.500h15M2.200 2.200l10.600 10.600M12.800 2.200L2.200 12.800" stroke="#444" stroke-width="1.100"/><circle cx="7.500" cy="7.500" r="1.600" fill="#ddd" stroke="#444"/></svg>
<svg style="left:781.5px;top:175.3px" width="15" height="12" viewBox="0 0 15 12"><rect x="1" y="0.500" width="13" height="11" fill="#f0f0f0" stroke="#555"/><path d="M1 11v-3l1.500-1 1 -2 1 2.500 1.500-5 1 3 1-2 1.500 4 1-2.500 1 1.500 1 -1 1 2v3.500z" fill="#444"/></svg>
<svg style="left:781.2px;top:197.8px" width="15" height="15" viewBox="0 0 15 15"><circle cx="7.500" cy="7.500" r="6.400" fill="#5a5a5a" stroke="#333" stroke-width="0.800"/><circle cx="7.500" cy="4" r="1.300" fill="#fff"/><path d="M6 6.500h2.500v5M5.800 11.500h4" stroke="#fff" stroke-width="1.500" fill="none"/></svg>
<svg style="left:781.0px;top:233.5px" width="15" height="11" viewBox="0 0 15 11"><path d="M4 2.300h10" stroke="#333" stroke-width="1.300"/><ellipse cx="4" cy="2.300" rx="3.600" ry="1.900" fill="#2e2e2e"/><path d="M1 7.800h9" stroke="#333" stroke-width="1.400"/><ellipse cx="11.500" cy="7.800" rx="2.800" ry="2.700" fill="#555"/></svg>
<svg style="left:782.5px;top:254.0px" width="13" height="16" viewBox="0 0 13 16"><path d="M4 10h5.500v5h-5.500z" fill="#f4f4f4" stroke="#222" stroke-width="1.800"/><path d="M5 9.500l-2.500-6M6.700 9.500V1M8.300 9.500l3.200-5" stroke="#333" stroke-width="1.500"/><path d="M1.500 2.500l2 3.500" stroke="#333" stroke-width="2.200"/><circle cx="11.800" cy="4" r="1.700" fill="#222"/></svg>
<svg style="left:780.0px;top:279.5px" width="15" height="13" viewBox="0 0 15 13"><path d="M0.500 1h2M0.500 3.500h2M0.500 6h2M4 1h2M4 3.500h2" stroke="#444" stroke-width="1.100"/><path d="M8 1.500c0-1.500 3.500-1.500 3.500 0l-0.700 5h-2.100z" fill="#444"/><path d="M4 7.500h11v3.300h-11z" fill="#3a3a3a"/><path d="M4 12.200h11" stroke="#555" stroke-width="1"/></svg>
<div class="t b" style="left:783.500px;top:312px;font-size:15px;line-height:16px;height:16px;color:#3a3a3a">¶</div>
<svg style="left:781.5px;top:347.0px" width="15" height="15" viewBox="0 0 15 15"><path d="M2 13.500l10-11" stroke="#222" stroke-width="2.200"/><path d="M3 2l9.500 10.500" stroke="#333" stroke-width="1.800"/><path d="M0.500 12l3 3" stroke="#111" stroke-width="2.500"/><path d="M1 1l3 0.500-2.500 2.500zM11 0.500l3.500 1-2 3z" fill="#222"/></svg>
<svg style="left:782.5px;top:372.0px" width="13" height="14" viewBox="0 0 13 14"><path d="M6.500 0v5" stroke="#333" stroke-width="1.200"/><path d="M4.500 3h4l-2 3z" fill="#222"/><path d="M1 7.500l5.500-2 5.500 2v4l-5.500 2.500-5.500-2.500z" fill="#333"/><path d="M1 7.500l5.500 2 5.500-2" stroke="#999" stroke-width="0.700" fill="none"/></svg>
<div class="t" style="left:781.500px;top:404.500px;font-size:15.500px;line-height:17px;height:17px;color:#333">A</div><div class="a" style="left:792.500px;top:405px;width:1px;height:15px;background:#333"></div>
<div class="a" style="left:802px;top:80px;width:1px;height:514px;background:#707070"></div>
<div class="a ptabs" style="top:80px"><div class="ptab on" style="left:0px">颜色</div><div class="ptab" style="left:28px">色板</div><div class="ptab" style="left:56px">样式</div><svg style="left:180px;top:4px" width="11" height="7" viewBox="0 0 11 7"><path d="M0 1.500h3.500l-1.750 2.500z" fill="#222"/><path d="M4.500 0.500h6M4.500 2.500h6M4.500 4.500h6M4.500 6.500h6" stroke="#333" stroke-width="0.900"/></svg></div>
<div class="a panel" style="top:94px;height:89.500px"></div>
<div class="a" style="left:820.500px;top:114px;width:13px;height:12.500px;background:#000;box-shadow:0 0 0 1px #bbb"></div>
<div class="a" style="left:809px;top:103px;width:16.500px;height:15.500px;background:#fff;border:1px solid #222"></div>
<div class="t" style="left:838px;top:103.0px;color:#333">R</div><div class="a" style="left:848px;top:106.5px;width:76.500px;height:4.500px;background:linear-gradient(90deg,#19e0e6,#fff);border:1px solid #a8a8a8;border-top-color:#8c8c8c"></div><svg style="left:919px;top:111.0px" width="9" height="7" viewBox="0 0 9 7"><path d="M4.500 0.500L8 5.500a1 1 0 0 1-1 1H2a1 1 0 0 1-1-1z" fill="#fff" stroke="#6a9a6a" stroke-width="1"/></svg><div class="inp" style="left:928px;top:101.0px;width:28.500px;height:16px"></div><div class="t" style="left:931px;top:103.0px;color:#333;font-size:8.600px">255</div>
<div class="t" style="left:838px;top:123.5px;color:#333">G</div><div class="a" style="left:848px;top:127px;width:76.500px;height:4.500px;background:linear-gradient(90deg,#e619e0,#fff);border:1px solid #a8a8a8;border-top-color:#8c8c8c"></div><svg style="left:919px;top:131.5px" width="9" height="7" viewBox="0 0 9 7"><path d="M4.500 0.500L8 5.500a1 1 0 0 1-1 1H2a1 1 0 0 1-1-1z" fill="#fff" stroke="#6a9a6a" stroke-width="1"/></svg><div class="inp" style="left:928px;top:121.5px;width:28.500px;height:16px"></div><div class="t" style="left:931px;top:123.5px;color:#333;font-size:8.600px">255</div>
<div class="t" style="left:838px;top:144.0px;color:#333">B</div><div class="a" style="left:848px;top:147.5px;width:76.500px;height:4.500px;background:linear-gradient(90deg,#f4f019,#fff);border:1px solid #a8a8a8;border-top-color:#8c8c8c"></div><svg style="left:919px;top:152.0px" width="9" height="7" viewBox="0 0 9 7"><path d="M4.500 0.500L8 5.500a1 1 0 0 1-1 1H2a1 1 0 0 1-1-1z" fill="#fff" stroke="#6a9a6a" stroke-width="1"/></svg><div class="inp" style="left:928px;top:142.0px;width:28.500px;height:16px"></div><div class="t" style="left:931px;top:144.0px;color:#333;font-size:8.600px">255</div>
<div class="a" style="left:809px;top:166.500px;width:149.500px;height:10.500px;background:linear-gradient(rgba(255,255,255,0.600),rgba(255,255,255,0) 42%,rgba(0,0,0,0) 55%,rgba(0,0,0,0.970)),linear-gradient(90deg,#e8201a 0,#f08020 8%,#f8e020 17%,#90c020 25%,#109a40 33%,#10a0a0 42%,#20a0e8 50%,#2060c0 58%,#30208a 66%,#80209a 74%,#d8208a 83%,#e82050 92%,#e02020 100%)"></div>
<div class="a" style="left:958px;top:166.500px;width:6.500px;height:5px;background:#fff"></div><div class="a" style="left:958px;top:171.500px;width:6.500px;height:5.500px;background:#000"></div>
<div class="a" style="left:803px;top:183px;width:193px;height:2px;background:#333"></div>
<div class="a ptabs" style="top:185px"><div class="ptab" style="left:0px">调整</div><div class="ptab on" style="left:28px">蒙版</div><svg style="left:180px;top:4px" width="11" height="7" viewBox="0 0 11 7"><path d="M0 1.500h3.500l-1.750 2.500z" fill="#222"/><path d="M4.500 0.500h6M4.500 2.500h6M4.500 4.500h6M4.500 6.500h6" stroke="#333" stroke-width="0.900"/></svg></div>
<div class="a panel" style="top:198.500px;height:182px"></div>
<div class="a" style="left:809px;top:200.500px;width:19.500px;height:25.500px;background:#fff;border:1px solid #333"></div>
<div class="t b" style="left:834.500px;top:207.500px;font-style:italic;font-size:9.400px;color:#111;letter-spacing:-0.200px">未选择蒙版</div>
<svg style="left:932.5px;top:207.0px" width="11" height="11" viewBox="0 0 11 11"><rect x="0.500" y="0.500" width="10" height="10" fill="#f2f2f2" stroke="#444" stroke-width="1.200"/><circle cx="5.500" cy="5.500" r="3" fill="#bbb" stroke="#666"/></svg>
<svg style="left:953.5px;top:207.5px" width="10" height="10" viewBox="0 0 10 10"><path d="M2 0.500l3.500 2-3.500 2zM8 0.500l-2.500 3.500 3.500 1z" fill="#6a6a6a"/><path d="M3.500 5.500l-2 4 3.500-1zM6 6l3 0.500-1 3z" fill="#8a8a8a"/></svg>
<div class="a" style="left:806px;top:228.5px;width:161.5px;height:2px;border-top:1px solid #b0b0b0;background:#e6e6e6"></div>
<div class="t dis" style="left:806px;top:238px">浓度:</div>
<div class="dinp" style="left:923px;top:233.500px;width:43.500px;height:16.500px"></div>
<div class="a" style="left:811px;top:256px;width:151.500px;height:3px;background:#f0f0f0;border-top:1px solid #e0e0e0;border-radius:1px"></div>
<div class="t dis" style="left:806px;top:268.500px">羽化:</div>
<div class="dinp" style="left:923px;top:265.500px;width:43.500px;height:16px"></div>
<div class="a" style="left:811px;top:287.500px;width:151.500px;height:3px;background:#f0f0f0;border-top:1px solid #e0e0e0;border-radius:1px"></div>
<div class="t dis" style="left:806px;top:301.500px">调整:</div>
<div class="btn" style="left:904.500px;top:300.5px;width:61.500px;height:13.500px;line-height:11.500px">蒙版边缘...</div>
<div class="btn" style="left:904.500px;top:322.5px;width:61.500px;height:13.500px;line-height:11.500px">颜色范围...</div>
<div class="btn" style="left:904.500px;top:344px;width:61.500px;height:13.500px;line-height:11.500px">反相</div>
<div class="a" style="left:806px;top:364px;width:161.5px;height:2px;border-top:1px solid #b0b0b0;background:#e6e6e6"></div>
<svg style="left:812.5px;top:367.5px" width="8" height="8" viewBox="0 0 8 8"><circle cx="4" cy="4" r="3.200" fill="none" stroke="#c2c2c2" stroke-width="1" stroke-dasharray="1.500 1"/></svg>
<svg style="left:831.5px;top:367.0px" width="13" height="8" viewBox="0 0 13 8"><path d="M0.500 4c3-4.500 9-4.500 12 0-3 4-9 4-12 0z" fill="#f4f4f4" stroke="#8ecad0" stroke-width="1"/><circle cx="6.500" cy="4" r="1.800" fill="#6bb"/></svg>
<svg style="left:852.0px;top:367.0px" width="11" height="9" viewBox="0 0 11 9"><path d="M0.500 0.500l2 1.500 1.500 5h6l0.500-4.500h-7.500" fill="#e8c8d0" stroke="#b87888" stroke-width="1"/><circle cx="5" cy="8" r="0.900" fill="#a67"/><circle cx="9" cy="8" r="0.900" fill="#a67"/></svg>
<svg style="left:953.5px;top:367.0px" width="8" height="9" viewBox="0 0 8 9"><path d="M1 2.500h6v6h-5z" fill="#aaa" stroke="#888" stroke-width="0.800"/><path d="M0.500 1.500h7" stroke="#777" stroke-width="1.200"/></svg>
<div class="a" style="left:803px;top:380.500px;width:193px;height:2.500px;background:#333"></div>
<div class="a ptabs" style="top:383px"><div class="ptab on" style="left:0px">图层</div><div class="ptab" style="left:28px">通道</div><div class="ptab" style="left:56px">路径</div><svg style="left:180px;top:4px" width="11" height="7" viewBox="0 0 11 7"><path d="M0 1.500h3.500l-1.750 2.500z" fill="#222"/><path d="M4.500 0.500h6M4.500 2.500h6M4.500 4.500h6M4.500 6.500h6" stroke="#333" stroke-width="0.900"/></svg></div>
<div class="a panel" style="top:396px;height:198px"></div>
<div class="inp" style="left:807px;top:399.500px;width:94.500px;height:15px;border-color:#f2f2f2"></div><div class="a" style="left:888px;top:400.500px;width:12.500px;height:13px;background:#f0f0f0"></div><div class="t" style="left:812px;top:401.500px;color:#333;font-size:9px">正常</div>
<svg style="left:893.0px;top:406.0px" width="5" height="3" viewBox="0 0 5 3"><polygon points="0,0 5,0 2.5,3" fill="#8a8a8a"/></svg>
<div class="t dis" style="left:904.500px;top:401.500px;font-size:9.400px">不透明度:</div>
<div class="a" style="left:947.500px;top:400px;width:31px;height:14.500px;background:#e2e2e2;border:1px solid #efefef"></div><div class="t" style="left:950.500px;top:400.800px;color:#7a7a7a;font-size:8.600px">100%</div>
<div class="a" style="left:980px;top:400px;width:12.500px;height:14.500px;background:#e6e6e6;border:1px solid #f2f2f2"></div>
<svg style="left:985.0px;top:405.5px" width="3" height="4" viewBox="0 0 3 4"><polygon points="0,0 3,0 1.5,4" fill="#aaa"/></svg>
<div class="a" style="left:803px;top:417px;width:193px;height:1px;background:#e8e8e8"></div>
<div class="t dis" style="left:810px;top:422.500px">锁定:</div>
<svg style="left:835.5px;top:422.5px" width="9" height="9" viewBox="0 0 9 9"><rect x="0.500" y="0.500" width="8" height="8" fill="#f2f2f2" stroke="#666"/><path d="M1 1h2.300v2.300H1zM5.600 1h2.400v2.300H5.600zM3.300 3.300h2.300v2.300H3.300zM1 5.600h2.300v2.400H1zM5.600 5.600h2.400v2.400H5.600z" fill="#c8c8c8"/></svg>
<svg style="left:849.5px;top:422.5px" width="11" height="10" viewBox="0 0 11 10"><path d="M4 6l6.500-5.500" stroke="#666" stroke-width="1.300"/><path d="M0.500 9.500c1.500-0.300 2-2 3.500-3.500l1.500 1.200c-1 2-3 3-5 2.300z" fill="#444"/></svg>
<svg style="left:863.5px;top:422.0px" width="10" height="10" viewBox="0 0 10 10"><path d="M5 0.500v9M0.500 5h9" stroke="#555" stroke-width="1.100"/><path d="M5 0l1.500 2h-3zM5 10l1.500-2h-3zM0 5l2-1.500v3zM10 5l-2-1.500v3z" fill="#555"/></svg>
<svg style="left:878.0px;top:422.5px" width="8" height="9" viewBox="0 0 8 9"><path d="M1.800 4v-1.500a2.200 2.200 0 0 1 4.400 0v1.500" fill="none" stroke="#666" stroke-width="1.300"/><rect x="0.500" y="4" width="7" height="4.500" fill="#777"/></svg>
<div class="t dis" style="left:924px;top:422.500px">填充:</div>
<div class="a" style="left:947.500px;top:421.500px;width:31px;height:14px;background:#e2e2e2;border:1px solid #efefef"></div><div class="t" style="left:950.500px;top:421.800px;color:#7a7a7a;font-size:8.600px">100%</div>
<div class="a" style="left:980px;top:421.500px;width:12.500px;height:14px;background:#e6e6e6;border:1px solid #f2f2f2"></div>
<svg style="left:985.0px;top:426.5px" width="3" height="4" viewBox="0 0 3 4"><polygon points="0,0 3,0 1.5,4" fill="#aaa"/></svg>
<div class="a" style="left:803px;top:437px;width:179.500px;height:1px;background:#b4b4b4"></div>
<div class="a" style="left:982.500px;top:437.500px;width:13.500px;height:156.500px;background:#e8e8e8;border-left:1px solid #f4f4f4"></div>
<svg style="left:986px;top:443.500px" width="6" height="4" viewBox="0 0 6 4"><path d="M0.500 3.500L3 1l2.500 2.500" stroke="#999" stroke-width="1.200" fill="none"/></svg>
<div class="a" style="left:822px;top:438px;width:160.500px;height:31px;background:#3399ff"></div>
<div class="a" style="left:803px;top:469px;width:179.500px;height:1px;background:#ababab"></div>
<div class="a" style="left:806.500px;top:446px;width:11px;height:11px;background:#dedede;border:1px solid #e8e8e8"></div>
<svg style="left:808.0px;top:448.5px" width="9" height="6" viewBox="0 0 9 6"><path d="M0 3c2.500-3.500 6.500-3.500 9 0-2.500 3-6.500 3-9 0z" fill="#222"/><circle cx="4.500" cy="3" r="1.200" fill="#888"/></svg>
<div class="a" style="left:825.500px;top:440px;width:18.500px;height:25.500px;background:#fff;border:1px solid #1e3c66"></div>
<div class="t b" style="left:850.500px;top:447.500px;font-style:italic;font-size:9.400px;color:#fff">背景</div>
<svg style="left:963.0px;top:448.8px" width="8" height="8" viewBox="0 0 8 8"><path d="M2 3.500v-1a2 2 0 0 1 4 0v1" fill="none" stroke="#223" stroke-width="1.200"/><rect x="0.500" y="3.500" width="7" height="4" fill="#fff" stroke="#223" stroke-width="0.900"/></svg>
<svg style="left:0;top:0" width="1000" height="594" viewBox="0 0 1000 594"><g fill="#fff" opacity="0.940"><path d="M824 562.300L869 539.200L882.500 553H871L866.200 548.600L847.400 557.800V562.500H846.400V565H838.400L824 562.300z"/><path d="M838.400 562h8v22.500h-8z"/><path d="M846 558.500l10-0.500 15-5h11.300v5.500H870l-10 5h-14z"/><path d="M846.400 569.400h13.600l10-4.400h10.500v5.300H871l-11 4.500h-13.600z"/><path d="M846.400 580.200H860l9-3.700h9v4h-8l-8.500 4h-15.100z"/><path d="M856 563h4v18h-4z"/><path d="M886 554.300h4v3.400h-4zM890.800 557.600h3v3.300h-3zM881.500 560.400h4.500v4.600h-4.500zM892.600 562.300h3v3.700h-3zM886 566h4.800v5.700h-4.800zM877 573h4.300v4.400h-4.300zM891.700 571.700h3.800v4.800h-3.800zM882 567.500h3v3h-3zM887 575.500h3v3h-3z"/></g></svg>
<div class="t" style="left:899px;top:549px;font-size:22.500px;line-height:26px;height:26px;font-weight:900;color:#fff;opacity:0.930;letter-spacing:0.100px;text-shadow:0.500px 1px 1px rgba(120,120,120,0.500)">系统之家</div>
<div class="t" style="left:892px;top:575px;font-family:'Liberation Serif',serif;font-size:10px;line-height:11px;height:11px;color:#fff;opacity:0.900;letter-spacing:0.400px">XITONGZHIJIA.NET</div>
<div class="a wl"></div><div class="a wl2"></div><div class="a wr"></div><div class="a wr2"></div><div class="a wr3"></div><div class="a wr4"></div>
</body>
</html>
